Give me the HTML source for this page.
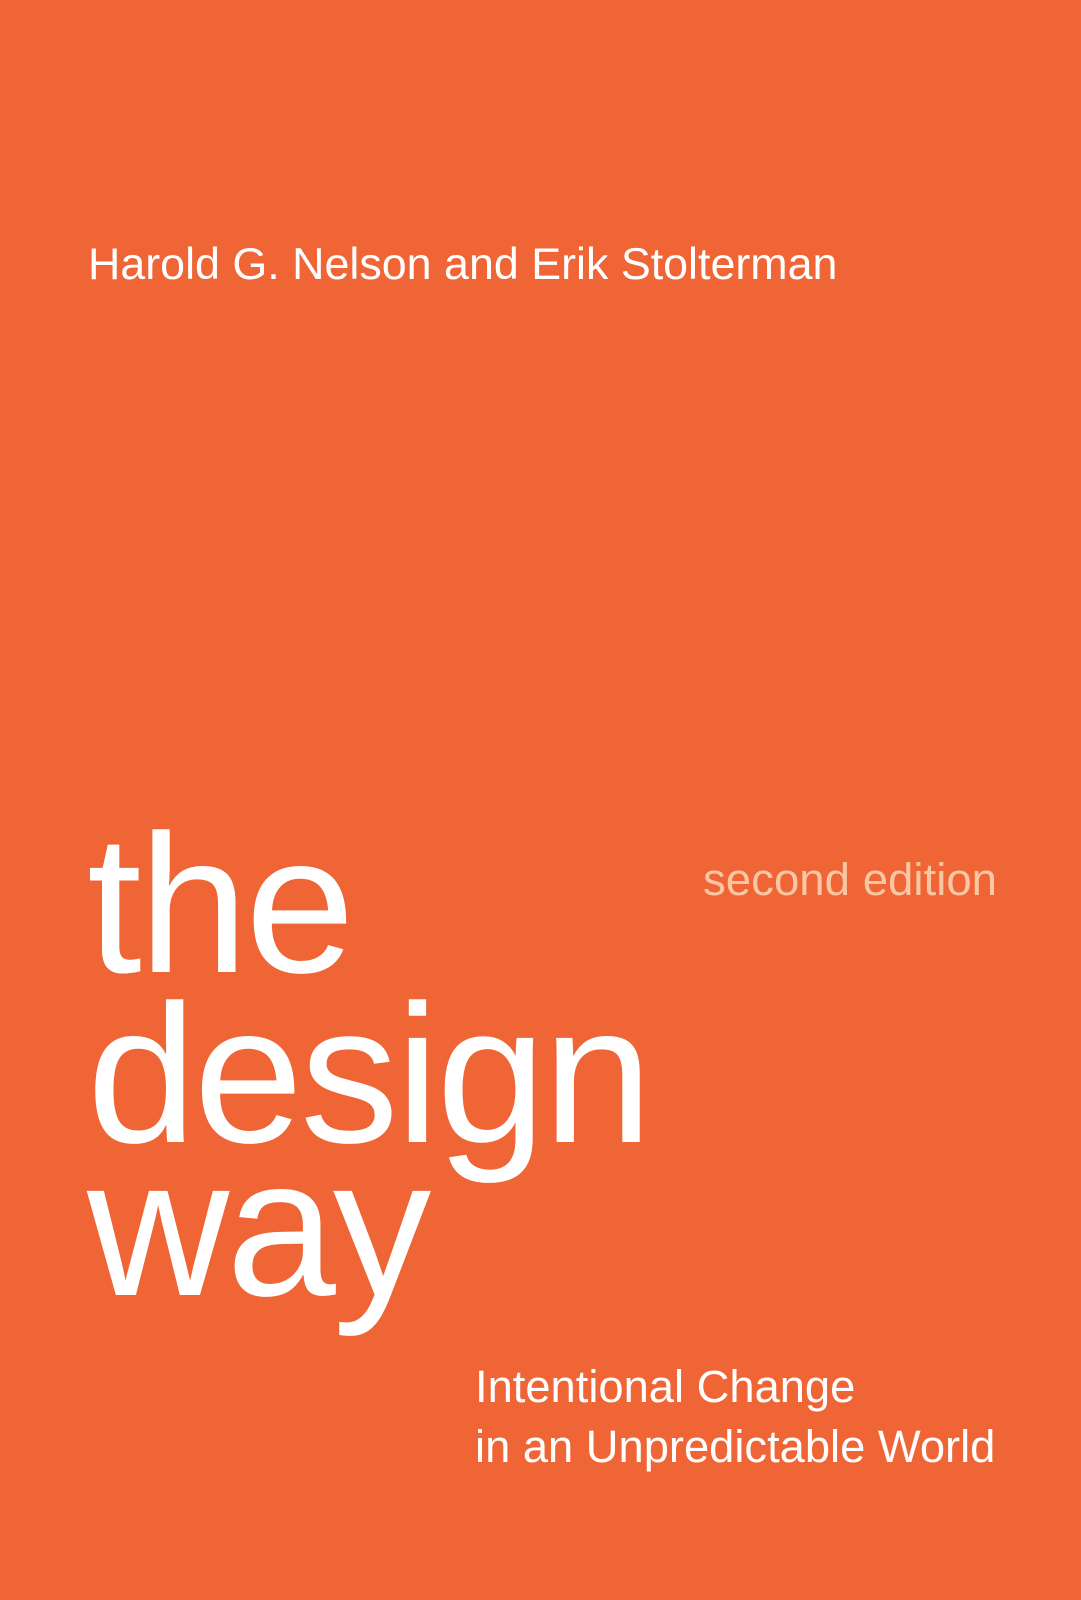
<!DOCTYPE html>
<html><head><meta charset="utf-8"><style>
html,body{margin:0;padding:0}
body{width:1081px;height:1600px;background:#EF6535;position:relative;overflow:hidden;font-family:"Liberation Sans",Arial,sans-serif;color:#fff}
.t{position:absolute;line-height:1;white-space:nowrap}
.a{left:88px;top:242px;font-size:44.8px}
.s{left:703px;top:857px;font-size:45.6px;color:#F9C7A3}
.b{left:87px;font-size:197px;letter-spacing:-3px}
.u{left:475px;font-size:45.3px}
</style></head><body>
<div class="t a">Harold G. Nelson and Erik Stolterman</div>
<div class="t s">second edition</div>
<div class="t b" style="top:806px">the</div>
<div class="t b" style="top:976px">design</div>
<div class="t b" style="top:1129px">way</div>
<div class="t u" style="top:1364px">Intentional Change</div>
<div class="t u" style="top:1424px">in an Unpredictable World</div>
</body></html>
